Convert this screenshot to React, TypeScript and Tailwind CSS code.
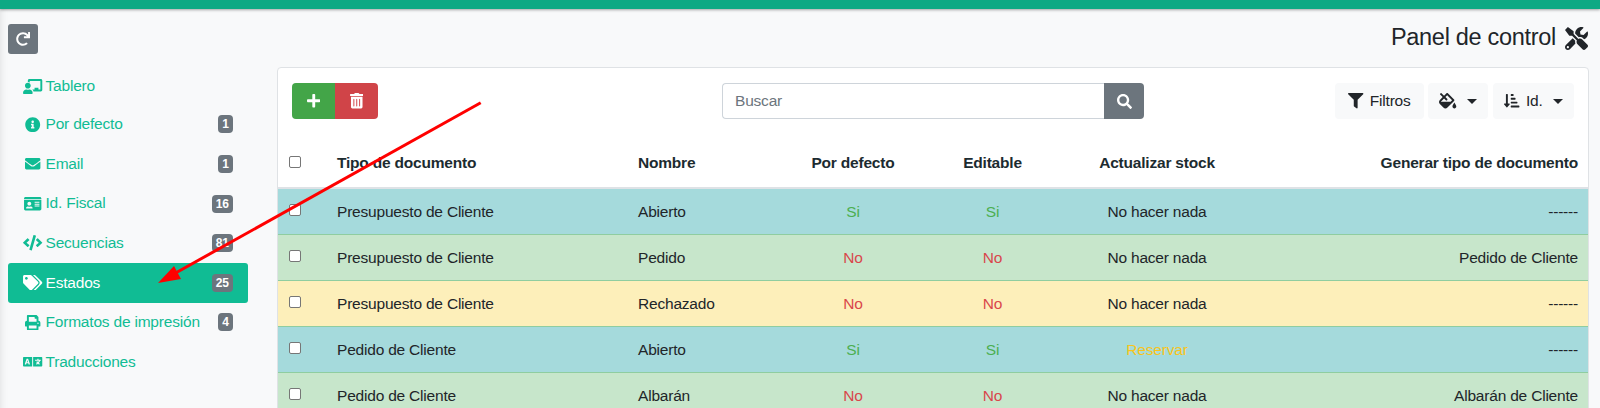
import {
  FaChalkboardTeacher,
  FaCode,
  FaEnvelope,
  FaFillDrip,
  FaFilter,
  FaIdCard,
  FaInfoCircle,
  FaLanguage,
  FaPlus,
  FaPrint,
  FaRedo,
  FaSearch,
  FaSortAmountDownAlt,
  FaTags,
  FaTools,
  FaTrashAlt,
} from "react-icons/fa";

const menu = [
  { label: "Tablero", icon: FaChalkboardTeacher, size: "w-[19.3px]", first: true },
  { label: "Por defecto", icon: FaInfoCircle, size: "w-[15.4px]", badge: 1 },
  { label: "Email", icon: FaEnvelope, size: "w-[15.4px]", badge: 1 },
  { label: "Id. Fiscal", icon: FaIdCard, size: "w-[17.4px]", badge: 16 },
  { label: "Secuencias", icon: FaCode, size: "w-[19.3px]", badge: 81 },
  { label: "Estados", icon: FaTags, size: "w-[19.3px]", badge: 25, active: true },
  { label: "Formatos de impresión", icon: FaPrint, size: "w-[15.4px]", badge: 4 },
  { label: "Traducciones", icon: FaLanguage, size: "w-[19.3px]" },
];

const rows = [
  { bg: "bg-[#a5dadc]", tipo: "Presupuesto de Cliente", nombre: "Abierto", flag: true, stock: "No hacer nada", gen: "------" },
  { bg: "bg-[#c7e6cb]", tipo: "Presupuesto de Cliente", nombre: "Pedido", flag: false, stock: "No hacer nada", gen: "Pedido de Cliente" },
  { bg: "bg-[#fdefba]", tipo: "Presupuesto de Cliente", nombre: "Rechazado", flag: false, stock: "No hacer nada", gen: "------" },
  { bg: "bg-[#a5dadc]", tipo: "Pedido de Cliente", nombre: "Abierto", flag: true, stock: "Reservar", gen: "------" },
  { bg: "bg-[#c7e6cb]", tipo: "Pedido de Cliente", nombre: "Albarán", flag: false, stock: "No hacer nada", gen: "Albarán de Cliente" },
];

function Check() {
  return <span className="block h-3 w-3 rounded-[2px] border border-[#767676] bg-white" />;
}

function Caret() {
  return <span className="ml-[10px] h-0 w-0 border-x-[5px] border-t-[5px] border-x-transparent border-t-[#212529]" />;
}

export default function App() {
  return (
    <div className="relative h-[408px] w-[1600px] overflow-hidden bg-[#f8f9fa] font-['Liberation_Sans',sans-serif] text-[15.5px] tracking-[-0.2px] text-[#212529]">
      <div className="h-[9px] bg-[#0da984] shadow-[0_1px_3px_rgba(0,0,0,0.35)]" />
      <div className="flex shadow-[inset_8px_0_8px_-8px_rgba(0,0,0,0.12)]">
        <aside className="w-[277px] shrink-0 pl-2 pt-[15px]">
          <button className="flex h-[30px] w-[30px] items-center justify-center rounded-[3px] bg-[#6c757d] text-white">
            <FaRedo className="h-[14px] w-[14px]" />
          </button>
          <nav className="mt-[11px] w-[240px]">
            {menu.map((m) => (
              <div
                key={m.label}
                className={`flex h-[39.6px] items-center rounded-[3px] pl-[14px] pr-[15px] ${m.first ? "pt-[3px]" : ""} ${m.active ? "bg-[#10bc94] text-white" : "text-[#10bc94]"}`}
              >
                <span className="flex w-[22px] justify-center">
                  <m.icon className={`h-[15.4px] ${m.size}`} />
                </span>
                <span className="ml-[1.5px] flex-1 pb-[1px]">{m.label}</span>
                {m.badge !== undefined && (
                  <span className="rounded-[4px] bg-[#6c757d] px-[4px] py-[2px] text-[12px] leading-[14px] font-bold tracking-normal text-white">
                    {m.badge}
                  </span>
                )}
              </div>
            ))}
          </nav>
        </aside>
        <main className="min-w-0 flex-1 pr-[11px]">
          <div className="flex h-[58px] items-center justify-end">
            <h1 className="text-[23.5px] leading-none tracking-[-0.3px]">Panel de control</h1>
            <FaTools className="mr-[1px] ml-[9px] h-[23px] w-[23px]" />
          </div>
          <section className="rounded-t-[4px] border border-[#dfe2e5] bg-white">
            <div className="flex h-[71px] items-start pl-[14px] pr-[14px] pt-[15px]">
              <div className="flex w-[430px]">
                <button className="flex h-[36px] w-[43px] items-center justify-center rounded-l-[4px] bg-[#43a548] text-white">
                  <FaPlus className="h-[15.4px] w-[13.5px]" />
                </button>
                <button className="flex h-[36px] w-[43px] items-center justify-center rounded-r-[4px] bg-[#d04448] text-white">
                  <FaTrashAlt className="h-[15.4px] w-[13.5px]" />
                </button>
              </div>
              <div className="flex h-[36px] w-[422px]">
                <div className="flex flex-1 items-center rounded-l-[4px] border border-r-0 border-[#ced4da] pl-3 text-[#6c757d]">
                  Buscar
                </div>
                <button className="flex w-[40px] items-center justify-center rounded-r-[4px] bg-[#6c757d] text-white">
                  <FaSearch className="h-[15px] w-[15px]" />
                </button>
              </div>
              <div className="ml-auto flex h-[36px] gap-1 text-[#212529]">
                <button className="flex w-[89px] items-center justify-center rounded-[4px] bg-[#f8f9fa]">
                  <FaFilter className="mr-[6px] h-[15.4px] w-[15.4px]" />
                  Filtros
                </button>
                <button className="flex w-[60px] items-center justify-center rounded-[4px] bg-[#f8f9fa]">
                  <FaFillDrip className="h-[15.4px] w-[17.3px]" />
                  <Caret />
                </button>
                <button className="ml-[1px] flex w-[81px] items-center justify-center rounded-[4px] bg-[#f8f9fa]">
                  <FaSortAmountDownAlt className="mr-[6px] h-[15.4px] w-[15.4px]" />
                  Id.
                  <Caret />
                </button>
              </div>
            </div>
            <table className="w-full table-fixed border-collapse">
              <colgroup>
                <col className="w-[46px]" />
                <col className="w-[302px]" />
                <col className="w-[169px]" />
                <col className="w-[116px]" />
                <col className="w-[163px]" />
                <col className="w-[166px]" />
                <col />
              </colgroup>
              <thead>
                <tr className="h-[49px] border-b-2 border-[#dee2e6] font-bold text-[#1c2b30]">
                  <th className="px-[11px] pb-[2px]"><Check /></th>
                  <th className="px-[13px] text-left">Tipo de documento</th>
                  <th className="px-3 text-left">Nombre</th>
                  <th className="px-0 text-center">Por defecto</th>
                  <th className="px-0 text-center">Editable</th>
                  <th className="px-0 text-center">Actualizar stock</th>
                  <th className="px-[10px] text-right">Generar tipo de documento</th>
                </tr>
              </thead>
              <tbody>
                {rows.map((r, i) => (
                  <tr key={i} className={`h-[46px] border-b border-[#8fcda0] ${r.bg}`}>
                    <td className="px-[11px] pb-[3px]"><Check /></td>
                    <td className="px-[13px] pt-[1px]">{r.tipo}</td>
                    <td className="px-3 pt-[1px]">{r.nombre}</td>
                    <td className={`pt-[1px] text-center ${r.flag ? "text-[#4caf50]" : "text-[#d9474b]"}`}>{r.flag ? "Si" : "No"}</td>
                    <td className={`pt-[1px] text-center ${r.flag ? "text-[#4caf50]" : "text-[#d9474b]"}`}>{r.flag ? "Si" : "No"}</td>
                    <td className={`pt-[1px] text-center ${r.stock === "Reservar" ? "text-[#f8c51c]" : ""}`}>{r.stock}</td>
                    <td className="px-[10px] pt-[1px] text-right">{r.gen}</td>
                  </tr>
                ))}
              </tbody>
            </table>
          </section>
        </main>
      </div>
      <svg className="pointer-events-none absolute left-0 top-0" width="1600" height="408">
        <line x1="480.7" y1="102.7" x2="172" y2="275" stroke="#f00" strokeWidth="3" />
        <polygon points="158,283 174,266 181,279" fill="#f00" />
      </svg>
    </div>
  );
}
